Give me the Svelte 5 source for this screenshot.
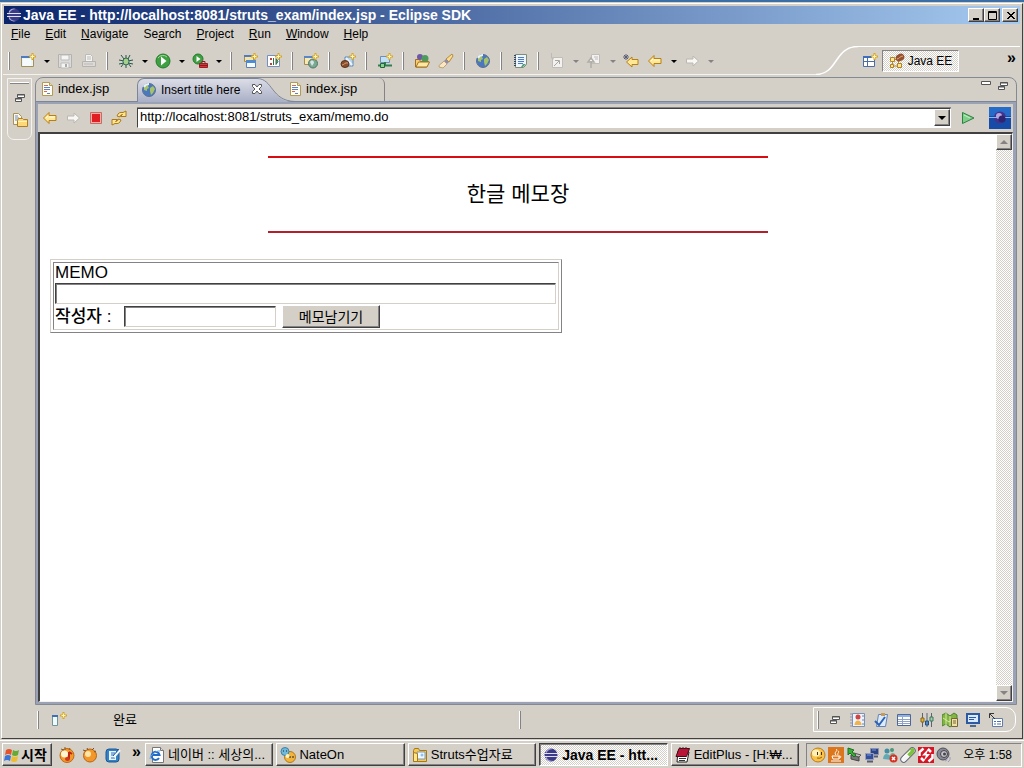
<script>
  const sparkle = '<path d="M12.5 0v7M9 3.500h7" stroke="#d9a520" stroke-width="2"/><path d="M12.500 1.500v4M10.500 3.500h4" stroke="#fff7b0"/>';
  const page = '<path d="M3.500 1.500h7l3 3v10h-10z" fill="#fffdf2" stroke="#b19a5a"/><path d="M10.500 1.500v3h3" fill="#f1dca0" stroke="#b19a5a"/>';
  const backArrow = '<path d="M1.500 8L7 2.500V5.500h7v5H7v3z" fill="#ffe795" stroke="#b97f10" stroke-linejoin="round"/><path d="M4 8l2-2M7 7h6" stroke="#fffbe0"/>';
  const fwdArrow = '<path d="M14.500 8L9 3V6H2.500v4H9v3z" fill="#f8f7f5" stroke="#bcb8b1"/>';
  const globe = '<circle cx="8" cy="8" r="6.500" fill="#4b78bd" stroke="#5d6f92"/><path d="M3 5c1-2 3-3 5-3l-1 2 1 2-2 1v2L3 8zM9 6l3-2 2 3-2 4-2 2-1-4z" fill="#a5c36b"/><path d="M3 5c1-2 3-3 5-3" stroke="#e6f2ff" stroke-width="2" fill="none"/>';
  const eclipse = '<circle cx="8" cy="8" r="6.500" fill="#3b3a87"/><path d="M3 4a6.500 6.500 0 0 1 7-2c-4 0-7 3-7 6s3 6 7 6A6.500 6.500 0 0 1 3 12z" fill="#a9a5d8"/><path d="M1 6.500h14M1 9.500h14" stroke="#dfe0f4" stroke-width="1.200"/>';

  const icons = {
    eclipse,
    globe,
    back: backArrow,
    forward: fwdArrow,
    newfile: '<path d="M1.500 3.500h12v10h-12z" fill="#e9f5f8" stroke="#a6905a"/><path d="M1 3h9v2H1z" fill="#4f7bc0"/><path d="M3 6h8v7H3z" fill="#fff" opacity=".6"/>' + sparkle,
    save: '<path d="M1.500 1.500h13v13h-13z" fill="#dddbd8" stroke="#b4b2b0"/><path d="M4 2h8v5H4zM4 10h8v5H4z" fill="#f6f5f4" stroke="#bbb"/><path d="M9 11v3" stroke="#aaa" stroke-width="2"/>',
    print: '<path d="M4.500 8V1.500h5l2 2V8" fill="#f5f4f3" stroke="#bbb"/><path d="M1.500 8.500h13v5h-13z" fill="#dcd9d6" stroke="#b5b3b0"/><path d="M6 4h4M6 6h4M3 11h9" stroke="#bbb"/>',
    bug: '<path d="M3 2l3 4M12 2l-2 4M1 7l5 1M15 7l-5 1M3 14l3-4M13 14l-3-4M8 2v3M8 12v3M1 11l5-1M15 11l-5-1" stroke="#24544b"/><ellipse cx="8" cy="8.500" rx="3" ry="3.500" fill="#a6cf8c" stroke="#2f6a50"/>',
    run: '<circle cx="8" cy="8" r="7" fill="#3fa043" stroke="#257b2c"/><path d="M3 5a6 6 0 0 1 9-1" stroke="#a3d79a" fill="none"/><path d="M6 3.500l5.500 4.500L6 12.500z" fill="#fff"/>',
    runext: '<circle cx="6" cy="6" r="5" fill="#3fa043" stroke="#257b2c"/><path d="M4.500 3l4 3-4 3z" fill="#fff"/><path d="M7.500 10.500h8v4h-8z" fill="#d6343b" stroke="#982024"/><path d="M10 10V8.500h3V10M7 12.500h9" stroke="#8a1a20" fill="none"/>',
    windows: '<path d="M2.500 2.500h9v6h-9z" fill="#f5e3a5" stroke="#a88a4a"/><path d="M2 2h8v2H2z" fill="#4f7bc0"/><path d="M4.500 7.500h9v7h-9z" fill="#f7fbff" stroke="#5a7fb8"/><path d="M4 7h10v3H4z" fill="#4f8bd0"/>' + sparkle,
    diagram: '<path d="M1.500 2.500h12v11h-12z" fill="#fff" stroke="#7290c2"/><path d="M4 5h2v2H4zM4 10h2v2H4z" fill="#c04040"/><path d="M7.500 5v7M10 5.500l2 3-2 3z" stroke="#386c4c" fill="#5aa06a"/>' + sparkle,
    webnew: '<path d="M1.500 3.500h11v8h-11z" fill="#f6e9b8" stroke="#a88a4a"/><path d="M1 3h9v2H1z" fill="#5a86c5"/><circle cx="10" cy="10.500" r="4.500" fill="#79a98f" stroke="#55756b"/><path d="M7 9c2-3 4-1 4 1l-2 3z" fill="#d6e6e8"/>' + sparkle,
    bean: '<path d="M5 4h8v9H5z" fill="#b3d3ee" stroke="#6289b5"/><path d="M6 5l6 7" stroke="#eaf5ff" stroke-width="2"/><ellipse cx="5" cy="11" rx="4" ry="3.500" fill="#8a4f2e" stroke="#5e331b"/><path d="M2 12c2 0 3-3 6-2" stroke="#d9a27e" fill="none"/>' + sparkle,
    server: '<path d="M3.500 3.500h9v6h-9z" fill="#c3e1f3" stroke="#6f90b6"/><path d="M8 9v4M1 12.500h14" stroke="#2d8050" stroke-width="2"/><path d="M3.500 10.500h4v4h-4z" fill="#8fd18f" stroke="#23683a"/>' + sparkle,
    opentype: '<path d="M1.500 6.500h4l1 2h8l-2 5.500h-11z" fill="#f7cf70" stroke="#a2701c"/><circle cx="6" cy="4" r="3" fill="#6d58a5"/><circle cx="11" cy="5.500" r="3.500" fill="#4d9a5c"/><path d="M2 14l2.500-5h11L13 14z" fill="#fde7a4" stroke="#a2701c"/>',
    brush: '<path d="M14 1L8 6l3 3 4-6z" fill="#f9dc8c" stroke="#b98b3c"/><path d="M8 6l3 3-2 2-3-3z" fill="#8e8cae"/><path d="M6 8l3 3-4 4-4-1c0-3 2-3 3-4z" fill="#f5e7c8" stroke="#c4a06a"/>',
    notebook: '<path d="M3.500 1.500h11v10l-3 3h-8z" fill="#eef6fd" stroke="#7f8c78"/><path d="M6 4.500h6M6 6.500h6M6 8.500h6M6 10.500h5" stroke="#4f7bc0"/><path d="M3 2v12" stroke="#31446a" stroke-width="2" stroke-dasharray="1 1"/><path d="M14 11l-3 3H9l2-3z" fill="#4fa07c"/>',
    nextnote: '<path d="M3.500 4.500h10v10h-10z" fill="#f4f2f0" stroke="#c0bcb6"/><path d="M6 7.500h4.500V11M10 8l-5 5" stroke="#aaa6a0" fill="none"/><path d="M2.500 0v5L5 6" stroke="#bbb" fill="none"/>',
    prevnote: '<path d="M5.500 1.500h8v9h-8z" fill="#f4f2f0" stroke="#c0bcb6"/><path d="M5 15V8M2 9l3-4 3 4z" stroke="#b0aca6" fill="#fff" stroke-width="1.500"/><path d="M8 4h4M9 6h3" stroke="#bbb"/>',
    lastedit: '<path d="M3.500 9L9 4V6.500h6v5H9V14z" fill="#ffe795" stroke="#b97f10"/><path d="M3 1v6M0 4h6M1 2l4 4M5 2L1 6" stroke="#5c5f72"/>',
    perspective: '<path d="M1.500 3.500h11v10h-11z" fill="#fff" stroke="#4d6ea5"/><path d="M1 3h9v2H1z" fill="#3f6fbc"/><path d="M5.500 5v8M1 8.500h12" stroke="#4d6ea5"/>' + sparkle,
    javaee: '<path d="M3.500 6v7h6M5 6.500h4.500v4" stroke="#b28a38" fill="none"/><path d="M1.500 4.500h4v4h-4zM1.500 11.500h3v3h-3zM8.500 10.500h4v4h-4z" fill="#ffe694" stroke="#b08224"/><ellipse cx="11" cy="4.500" rx="4.500" ry="3.500" fill="#95502f" transform="rotate(-25 11 4.500)"/><path d="M8 6c2 0 3-3 6-3" stroke="#e0aa88" fill="none"/>',
    jsp: page + '<path d="M5 4.500h4M5 10.500h3" stroke="#d56a5a"/><path d="M5 6.500h6M5 8.500h6M8 12.500h3" stroke="#5b83c6"/>',
    restore: '<path d="M5.500 4.500h7v3h-7z" fill="#fff" stroke="#555"/><path d="M3.500 8.500h6v3h-6z" fill="#fff" stroke="#555"/><path d="M5 5h8M3 9h7" stroke="#555"/>',
    minimize: '<path d="M3.500 3.500h9v3h-9z" fill="#fff" stroke="#555"/>',
    explorer: '<path d="M1.500 1.500h5l3 3v8h-8z" fill="#fdf8e5" stroke="#a9915a"/><path d="M3 4h3M3 6h4M3 8h3" stroke="#6a8bc1"/><path d="M5.500 8.500l1-2h4l1 1h4v7h-10z" fill="#fbd878" stroke="#b07c24"/><path d="M6 9.500h9" stroke="#fff2bd"/>',
    stop: '<path d="M2.500 2.500h11v11h-11z" fill="#f4b0a7" stroke="#c86b65"/><path d="M4 4h8v8H4z" fill="#df1f22"/>',
    refresh: '<path d="M15 1v5.500H9.500l2-2C10 4.500 9 5.500 8.500 7L6 6C7 3 9 2 12 2.500z" fill="#ffe795" stroke="#ad7714" stroke-linejoin="round"/><path d="M1 15V9.500h5.500l-2 2c1.500 0 2.500-1 3-2.500L10 10c-1 3-3 4-6 3.500z" fill="#ffe795" stroke="#ad7714" stroke-linejoin="round"/>',
    go: '<path d="M2.500 2.500L14 8 2.500 13.500z" fill="#7fcf8b" stroke="#2d8140"/><path d="M4 5l6 3" stroke="#c8efc9"/>',
    close: '<path d="M3.500 3.500h2.500l2 2.500 2-2.500h2.500v2l-2.500 2.500 2.500 2.500v2H10L8 10l-2 2.500H3.500v-2L6 8 3.500 5.500z" fill="#fff" stroke="#555"/>',
    fastview: '<path d="M1.500 3.500h5v10h-5z" fill="#f0fafa" stroke="#75949a"/><path d="M1 3h6v2H1z" fill="#426eb8"/>' + sparkle,
    person: '<path d="M2.500 1.500h12v13h-12z" fill="#eef3fa" stroke="#7d8fb4"/><path d="M1 1v14" stroke="#8894ad" stroke-dasharray="2 1"/><circle cx="8" cy="5" r="2.500" fill="#cf4445"/><path d="M4.500 13c0-6 7-6 7 0z" fill="#f0b24a"/><path d="M13 3v10" stroke="#6686bb" stroke-dasharray="2 2"/>',
    tasks: '<path d="M5.500 2.500h9l-2 12h-9z" fill="#dceafa" stroke="#6484b4"/><path d="M8 1h4v3H8z" fill="#c99a57"/><path d="M2 9l4 4 6-8" stroke="#2d63b4" stroke-width="2" fill="none"/>',
    table: '<path d="M1.500 2.500h13v11h-13z" fill="#fff" stroke="#4e6796"/><path d="M2 3h12v2H2z" fill="#91afe0"/><path d="M2 7.500h12M2 9.500h12M2 11.500h12M6.500 5v8" stroke="#91a2c4"/>',
    sliders: '<path d="M3.500 1v14M8 1v14M12.500 1v14" stroke="#5c6474"/><path d="M2 6h3v4H2z" fill="#e5b63c" stroke="#866615"/><path d="M6.500 9h3v4h-3z" fill="#4c8bc8" stroke="#244e82"/><path d="M11 5h3v4h-3z" fill="#9ed0b0" stroke="#3e7855"/>',
    map: '<path d="M0 3l4-2 4 3 4-3 3 2v11l-3-2-4 3-4-3-4 2z" fill="#81b442" stroke="#4c812c"/><path d="M4 1v12M8 4v10M1 6l6 4 5-4" stroke="#d6eca0" fill="none"/><path d="M9.500 6.500h6v8h-6z" fill="#eee0a4" stroke="#766637"/><path d="M11 9h3M11 11h3" stroke="#766637"/>',
    console: '<path d="M2 2h12v9H2z" fill="#d6e9ff" stroke="#2c59a0" stroke-width="2"/><path d="M4 5.500h7M4 7.500h5" stroke="#2c59a0"/><path d="M5 14h6" stroke="#4d668c" stroke-width="2"/>',
    stack: '<path d="M4.500 6.500h10v8h-10z" fill="#fff" stroke="#637da8"/><path d="M6 9.500h2M9 9.500h4M6 12h2M9 12h4" stroke="#4b71af"/><path d="M1.500 6V1.500H6M2 2l5 5" stroke="#333"/>',
    windowsflag: '<path d="M2 3q3-2 6 0l-1 5q-3-2-6 0z" fill="#e7532b"/><path d="M9 3q3 2 6 0l-1 5q-3 2-6 0z" fill="#68a934"/><path d="M1 9q3-2 6 0l-1 5q-3-2-6 0z" fill="#3b75d7"/><path d="M8 9q3 2 6 0l-1 5q-3 2-6 0z" fill="#efbd2c"/>',
    music: '<circle cx="8" cy="8.500" r="7" fill="#f39a2c" stroke="#c26914"/><ellipse cx="5.500" cy="7" rx="3.500" ry="3.500" fill="#fff4d1"/><path d="M10 5v7M10 5l3 2" stroke="#bd2414" stroke-width="2"/><ellipse cx="8.500" cy="12" rx="2.500" ry="2" fill="#cf3520"/><path d="M2 2l3 1M6 0v3M11 1l-1 2" stroke="#8a5a22"/>',
    orange: '<circle cx="8" cy="8.500" r="6.500" fill="#f3972a" stroke="#ba6412"/><circle cx="6" cy="7" r="3" fill="#ffe4a8"/><path d="M1 3l3 1M5 1l1 2M12 1l-2 2M14 4l-2 1" stroke="#80521a"/>',
    desktop: '<rect x="1" y="2" width="13" height="13" rx="3" fill="#3383c4" stroke="#1b5798"/><path d="M4 4h7v9H4z" fill="#e9f5ff"/><path d="M6 6h4M6 8h3M6 11h4" stroke="#2c70b5"/><path d="M15 3l-6 7" stroke="#f3fbff" stroke-width="2"/><path d="M14 2l-6 7" stroke="#255a96"/>',
    ie: '<path d="M3.500.5h8l3 3v12h-11z" fill="#fff" stroke="#777"/><path d="M11.500.5v3h3" fill="#ddd" stroke="#777"/><path d="M10 11a4 4 0 1 1 .5-3H4" fill="none" stroke="#226cc8" stroke-width="2"/><path d="M1 12C1 8 8 3 11 4" stroke="#58a4ea" fill="none"/>',
    nateon: '<circle cx="10" cy="10" r="5.500" fill="#f2b43b" stroke="#b27a1e"/><circle cx="5" cy="4.500" r="4" fill="#6fb9da" stroke="#3882ac"/><path d="M3 4h1M6 4h1" stroke="#222"/><path d="M10 9v2M13 9v2" stroke="#222"/><circle cx="7.500" cy="9" r="2" fill="#fff1bd"/>',
    folder: '<path d="M1.500 3.500l1-2h4l1 2h7v11h-13z" fill="#f5c951" stroke="#a77818"/><path d="M5 5h8v7H5z" fill="#f1f8ff" stroke="#779ac0"/><path d="M1.500 14.500v-9l4 1v8z" fill="#ffe48a" stroke="#a77818"/><circle cx="10" cy="8" r="1.500" fill="#8fc2ec"/>',
    editplus: '<path d="M3 4l11 1-2 10H2z" fill="#fff" stroke="#222"/><path d="M4 1.500h10.500l-3 8H1z" fill="#b91637" stroke="#4a0718"/><path d="M4 11.500h7M4 13.500h6" stroke="#333"/><path d="M5 0v2M8 0v2M11 0v2" stroke="#333"/>',
    smile: '<circle cx="8" cy="8" r="7" fill="#f7c247" stroke="#bb7b1f"/><ellipse cx="6" cy="6" rx="4" ry="3.500" fill="#ffefb5"/><path d="M7.500 5v3M11.500 5v3" stroke="#46300b"/><path d="M7 11q3 1 5-1" stroke="#9b5e10" fill="none"/>',
    java: '<path d="M0 0h16v16H0z" fill="#dc761c"/><path d="M8 2c3 2-3 3 0 6M10 4c2 1-1 2 0 4M4 9h7v3H5zM11 9c3 0 2 2 0 2M3 14h10" stroke="#fff" fill="none"/>',
    removable: '<path d="M5 8l8 2v4l-8-2z" fill="#777" stroke="#444"/><path d="M5 8l3-2 7 2-2 2z" fill="#c4c4c4" stroke="#555"/><path d="M2 1l6 2-2 2 4 3-2 2-4-4-2 2z" fill="#3dae3a" stroke="#1c6e20"/>',
    network: '<path d="M6.500 1.500h8v6h-8z" fill="#2c4384" stroke="#8992b0"/><path d="M1.500 6.500h8v6h-8z" fill="#334f99" stroke="#999fba"/><path d="M3 14.500h6M10 9.500h4" stroke="#555b70" stroke-width="2"/><path d="M3 8h4M8 3h4" stroke="#7998dc"/>',
    messenger: '<circle cx="5" cy="4" r="2.500" fill="#418fa2"/><path d="M1 12q1-8 8-3l1 4z" fill="#60aab5"/><circle cx="10" cy="3" r="2" fill="#4c957a"/><path d="M8 8q3-5 6 1z" fill="#72b297"/><circle cx="11.500" cy="11.500" r="4" fill="#d63325"/><path d="M10 10l3 3M13 10l-3 3" stroke="#fff" stroke-width="1.500"/>',
    pill: '<g transform="rotate(-45 8 8)"><rect x="-1" y="5" width="18" height="6" rx="3" fill="#f4f6f4" stroke="#667"/><path d="M8 5.500h6a2.500 2.500 0 0 1 0 5H8z" fill="#7cc23b"/><path d="M3 6.500h10" stroke="#fff"/></g>',
    shield: '<path d="M0 0h16v16H0z" fill="#d61626"/><path d="M1.500 9V5l4-3.500M14.500 7v4l-4 3.500M6 14l-3-3M10 2l3 3" stroke="#fff" stroke-width="2.500"/><path d="M11 1L4 8.500h4L5 15l7-8H8.500z" fill="#fff"/>',
    speaker: '<circle cx="7" cy="7" r="6" fill="#888894" stroke="#4e4e5b"/><circle cx="8" cy="7" r="3.500" fill="#c2c2cc" stroke="#444"/><circle cx="8.500" cy="7" r="1.500" fill="#444"/><path d="M14 10q1 3-2 5M11 12q0 2-2 2" stroke="#9a9ac0" fill="none"/>'
  };

  const menus = [['', 'F', 'ile'], ['', 'E', 'dit'], ['', 'N', 'avigate'], ['Se', 'a', 'rch'], ['', 'P', 'roject'], ['', 'R', 'un'], ['', 'W', 'indow'], ['', 'H', 'elp']];

  // '|' is a separator, 'v' a drop-down arrow and 'd' a disabled one
  const tools = ['|', 'newfile', 'v', 'save', 'print', '|', 'bug', 'v', 'run', 'v', 'runext', 'v', '|', 'windows', 'diagram', '|', 'webnew', '|', 'bean', '|', 'server', '|', 'opentype', 'brush', '|', 'globe', '|', 'notebook', '|', 'nextnote', 'd', 'prevnote', 'd', 'lastedit', 'back', 'v', 'forward', 'd'];
  const views = ['restore', 'person', 'tasks', 'table', 'sliders', 'map', 'console', 'stack'];
  const tray = ['smile', 'java', 'removable', 'network', 'messenger', 'pill', 'shield', 'speaker'];
  const tasks = [
    { icon: 'ie', label: '네이버 :: 세상의...' },
    { icon: 'nateon', label: 'NateOn' },
    { icon: 'folder', label: 'Struts수업자료' },
    { icon: 'eclipse', label: 'Java EE - htt...', active: true },
    { icon: 'editplus', label: 'EditPlus - [H:₩...' }
  ];
  let url = $state('http://localhost:8081/struts_exam/memo.do');
  let memo = $state('');
  let author = $state('');
</script>

{#snippet icon(name)}
  <svg class="icon" viewBox="0 0 16 16" fill="none" aria-hidden="true">{@html icons[name]}</svg>
{/snippet}

{#snippet glyph(path)}
  <svg class="glyph" viewBox="0 0 11 11" fill="none" stroke="#000" aria-hidden="true"><path d={path} /></svg>
{/snippet}

<div class="desktop">
  <div class="window">
    <header class="titlebar">
      {@render icon('eclipse')}
      <h1>Java EE - http://localhost:8081/struts_exam/index.jsp - Eclipse SDK</h1>
      <div class="caption">
        <button aria-label="Minimize">{@render glyph('M2 9.500h6M2 8.500h6')}</button>
        <button aria-label="Maximize">{@render glyph('M1.500 1.500h8v8h-8zM1 2.500h9')}</button>
        <button class="apart" aria-label="Close">{@render glyph('M2 2l7 7M3 2l7 7M9 2L2 9M10 2L3 9')}</button>
      </div>
    </header>

    <nav class="menubar">
      {#each menus as [before, key, after]}
        <button>{before}<u>{key}</u>{after}</button>
      {/each}
    </nav>

    <div class="coolbar">
      <div class="tools">
        {#each tools as tool}
          {#if tool === '|'}
            <span class="sep"></span>
          {:else if tool === 'v' || tool === 'd'}
            <button class="drop" class:off={tool === 'd'} aria-label="More"></button>
          {:else}
            <button class="tool" aria-label={tool}>{@render icon(tool)}</button>
          {/if}
        {/each}
      </div>
      <svg class="swoosh" viewBox="0 0 42 29" fill="none" aria-hidden="true">
        <path d="M0 28.500C22 28.500 18 .5 42 .5" stroke="#fff" stroke-width="1.500" />
      </svg>
      <div class="perspectives">
        <button class="tool" aria-label="Open Perspective">{@render icon('perspective')}</button>
        <button class="current">{@render icon('javaee')}Java EE</button>
        <button class="more">»</button>
      </div>
    </div>

    <div class="workbench">
      <aside class="trim">
        <span class="grip"></span>
        <button aria-label="Restore">{@render icon('restore')}</button>
        <button aria-label="Project Explorer">{@render icon('explorer')}</button>
      </aside>

      <main class="folder">
        <div class="tabs">
          <button class="tab first">{@render icon('jsp')}index.jsp</button>
          <div class="tab selected">{@render icon('globe')}Insert title here</div>
          <div class="tail">
            <svg class="curve" viewBox="0 0 46 24" fill="none" aria-hidden="true">
              <defs>
                <linearGradient id="tabfill" x1="0" y1="0" x2="0" y2="1">
                  <stop offset="0" stop-color="#dcdde6" />
                  <stop offset="1" stop-color="#a9afc6" />
                </linearGradient>
              </defs>
              <path d="M0 0h8C24 0 22 23 44 24H0z" fill="url(#tabfill)" />
              <path d="M0 .5h8C24 .5 22 23 46 23.500" stroke="#7b8799" />
            </svg>
            <button class="closer" aria-label="Close tab">{@render icon('close')}</button>
          </div>
          <button class="tab last">{@render icon('jsp')}index.jsp</button>
          <div class="tabtools">
            <button aria-label="Minimize view">{@render icon('minimize')}</button>
            <button aria-label="Restore view">{@render icon('restore')}</button>
          </div>
        </div>

        <div class="browser">
          <div class="address">
            <button class="tool" aria-label="Back">{@render icon('back')}</button>
            <button class="tool" aria-label="Forward">{@render icon('forward')}</button>
            <button class="tool" aria-label="Stop">{@render icon('stop')}</button>
            <button class="tool" aria-label="Refresh">{@render icon('refresh')}</button>
            <div class="combo">
              <input aria-label="Address" bind:value={url} />
              <button class="drop" aria-label="History"></button>
            </div>
            <button class="tool go" aria-label="Go">{@render icon('go')}</button>
            <svg class="throbber" viewBox="0 0 22 22" aria-hidden="true">
              <rect width="22" height="22" fill="#164ca8" />
              <path d="M0 0h22v9H0z" fill="#246bca" />
              <circle cx="11" cy="10.500" r="6" fill="#43338d" />
              <circle cx="10" cy="9" r="3" fill="#b9a4df" />
              <path d="M0 10.500h22" stroke="#8bb6f4" />
              <circle cx="13" cy="12" r="3.500" fill="#30236f" />
            </svg>
          </div>

          <div class="viewport">
            <div class="page">
              <div class="banner">
                <h2>한글 메모장</h2>
              </div>
              <form class="memo" onsubmit={(e) => e.preventDefault()}>
                <div class="cell">
                  <label for="memo">MEMO</label>
                  <input id="memo" bind:value={memo} />
                  <div class="line">
                    <label for="author">작성자 :</label>
                    <input id="author" bind:value={author} />
                    <button>메모남기기</button>
                  </div>
                </div>
              </form>
            </div>
            <div class="scrollbar">
              <button class="up" aria-label="Scroll up"></button>
              <button class="down" aria-label="Scroll down"></button>
            </div>
          </div>
        </div>
      </main>
    </div>

    <footer class="status">
      <span class="sep"></span>
      <button class="fast" aria-label="Show view">{@render icon('fastview')}</button>
      <span class="message">완료</span>
      <span class="sep"></span>
      <div class="views">
        <span class="sep"></span>
        {#each views as view}
          <button aria-label={view}>{@render icon(view)}</button>
        {/each}
      </div>
    </footer>
  </div>

  <div class="taskbar">
    <button class="task start">{@render icon('windowsflag')}시작</button>
    <div class="quick">
      <button aria-label="Music">{@render icon('music')}</button>
      <button aria-label="Player">{@render icon('orange')}</button>
      <button aria-label="Desktop">{@render icon('desktop')}</button>
      <button class="more">»</button>
    </div>
    <div class="tasks">
      {#each tasks as task}
        <button class="task" class:active={task.active}>{@render icon(task.icon)}<span>{task.label}</span></button>
      {/each}
    </div>
    <div class="tray">
      {#each tray as item}
        {@render icon(item)}
      {/each}
      <time>오후 1:58</time>
    </div>
  </div>
</div>

<style>
  :global(body) {
    margin: 0;
    background: #3a6ea5;
  }
  .desktop {
    box-sizing: border-box;
    min-height: 100vh;
    padding-top: 2px;
    display: flex;
    flex-direction: column;
    background: #3a6ea5;
    color: #000;
    font: 12px/16px 'Liberation Sans', 'Noto Sans CJK KR', sans-serif;
  }
  .desktop * {
    box-sizing: border-box;
  }
  button,
  input {
    font: inherit;
    color: inherit;
  }
  button {
    display: flex;
    align-items: center;
    justify-content: center;
    padding: 0;
    border: 0;
    background: none;
    white-space: nowrap;
  }
  .icon {
    display: block;
    flex: none;
    width: 16px;
    height: 16px;
  }

  .window {
    flex: 1;
    display: flex;
    flex-direction: column;
    padding: 2px;
    background: #d4d0c8;
    border: 1px solid;
    border-color: #fff #404040 #404040 #fff;
    outline: 1px solid #d4d0c8;
    margin: 1px;
  }
  .titlebar {
    display: flex;
    align-items: center;
    gap: 1px;
    height: 18px;
    padding: 0 2px;
    background: linear-gradient(90deg, #0a246a, #a6caf0);
    color: #fff;
  }
  h1 {
    flex: 1;
    margin: 0;
    font-size: 14px;
    line-height: 16px;
    font-weight: 700;
    white-space: nowrap;
  }
  .caption {
    display: flex;
  }
  .caption button {
    width: 16px;
    height: 14px;
  }
  .caption .apart {
    margin-left: 2px;
  }
  .glyph {
    width: 11px;
    height: 11px;
  }
  .caption button,
  .combo .drop,
  .scrollbar button,
  .line button,
  .task {
    background: #d4d0c8;
    border: 1px solid;
    border-color: #fff #404040 #404040 #fff;
    box-shadow: inset -1px -1px #848284;
  }

  .menubar {
    display: flex;
    gap: 15px;
    height: 22px;
    padding: 2px 7px 4px;
  }

  .coolbar {
    display: flex;
    height: 29px;
    margin-bottom: 2px;
  }
  .tools {
    flex: 1;
    display: flex;
    align-items: center;
    margin-left: -1px;
    padding-top: 2px;
    border-bottom: 1px solid #f4f2ee;
  }
  .tool {
    width: 24px;
    height: 24px;
    flex: none;
  }
  .sep {
    flex: none;
    width: 13px;
    height: 18px;
    background: linear-gradient(90deg, #fff 1px, #848284 1px) 5px 0 / 2px 100% no-repeat;
  }
  .drop {
    flex: none;
    width: 13px;
    height: 16px;
  }
  .drop::after,
  .up::after,
  .down::after {
    content: '';
    border: 3px solid transparent;
    border-top-color: #000;
    border-bottom: 0;
  }
  .drop.off::after,
  .down::after {
    border-top-color: #848284;
  }
  .swoosh {
    width: 42px;
    height: 29px;
  }
  .perspectives {
    display: flex;
    align-items: center;
    width: 162px;
    border-top: 1px solid #fff;
  }
  .current {
    gap: 3px;
    width: 77px;
    height: 22px;
    border: 1px solid;
    border-color: #848284 #fff #fff #848284;
    background: repeating-conic-gradient(#fff 0 25%, #d4d0c8 0 50%) 0 0 / 2px 2px;
  }
  .more {
    font-size: 16px;
  }
  .perspectives .more {
    margin-left: auto;
    height: 22px;
    padding: 0 4px 6px 0;
    font-weight: 700;
  }

  .workbench {
    flex: 1;
    display: flex;
    gap: 3px;
    padding: 0 3px;
  }
  .trim {
    align-self: flex-start;
    display: flex;
    flex-direction: column;
    align-items: center;
    gap: 6px;
    width: 25px;
    height: 62px;
    margin-top: 1px;
    padding-top: 3px;
    border: 1px solid #f4f2ee;
    border-radius: 0 0 7px 7px;
  }
  .grip {
    width: 19px;
    height: 2px;
    border-top: 1px solid #fff;
    border-bottom: 1px solid #848284;
  }
  .folder {
    flex: 1;
    display: flex;
    flex-direction: column;
    border: 1px solid #848a94;
    border-radius: 8px 8px 0 0;
  }
  .tabs {
    display: flex;
    height: 24px;
    border-bottom: 1px solid #7b8799;
  }
  .tab {
    display: flex;
    align-items: center;
    justify-content: flex-start;
    gap: 3px;
    padding-bottom: 1px;
    white-space: nowrap;
    font-size: 13px;
  }
  .first {
    width: 101px;
    padding-left: 3px;
  }
  .selected {
    width: 112px;
    height: 24px;
    padding-left: 3px;
    border-left: 1px solid #7b8799;
    border-top: 1px solid #7b8799;
    border-radius: 7px 0 0 0;
    background: linear-gradient(#dcdde6, #a9afc6);
    font-size: 12px;
    gap: 4px;
  }
  .tail {
    position: relative;
    width: 38px;
    padding-top: 3px;
  }
  .curve {
    position: absolute;
    left: 0;
    top: 0;
    width: 46px;
    height: 24px;
  }
  .closer {
    position: relative;
  }
  .last {
    position: relative;
    width: 98px;
    border-right: 1px solid #848284;
    border-top-right-radius: 6px;
  }
  .tabtools {
    display: flex;
    gap: 1px;
    margin-left: auto;
    padding-right: 5px;
    height: 16px;
  }

  .browser {
    flex: 1;
    display: flex;
    flex-direction: column;
    border: 2px solid #9ca2b5;
    border-right-width: 3px;
  }
  .address {
    display: flex;
    align-items: center;
    height: 28px;
    padding: 0 2px 0 0;
  }
  .address .tool {
    width: 23px;
  }
  .combo {
    flex: 1;
    display: flex;
    height: 20px;
    margin-left: 7px;
    background: #fff;
    border: 1px solid;
    border-color: #404040 #fff #fff #404040;
    box-shadow: 0 -1px #848284;
  }
  .combo input {
    flex: 1;
    min-width: 0;
    padding: 0 2px 3px;
    border: 0;
    background: none;
    font-size: 13px;
    outline: none;
  }
  .combo .drop {
    width: 16px;
    height: 17px;
  }
  .combo .drop::after {
    border-width: 4px 4px 0;
  }
  .address .go {
    width: 34px;
  }
  .throbber {
    width: 22px;
    height: 22px;
    margin-left: 4px;
  }
  .viewport {
    flex: 1;
    display: flex;
    background: #fff;
    border: 2px solid #404040;
    border-width: 2px 1px 1px 2px;
    border-bottom-color: #f4f2ee;
    border-right-color: #f4f2ee;
  }
  .page {
    flex: 1;
    min-width: 0;
    padding: 22px 10px;
  }
  .banner {
    max-width: 500px;
    margin: 0 auto 26px;
    border-top: 2px solid #d80d14;
    border-bottom: 2px solid #b51f2b;
  }
  h2 {
    margin: 0;
    padding: 20px 0 21px;
    text-align: center;
    font-size: 21px;
    line-height: 32px;
    font-weight: 400;
  }
  .memo {
    max-width: 512px;
    padding: 2px;
    border: 1px solid;
    border-color: #d4d0c8 #848284 #848284 #d4d0c8;
  }
  .cell {
    padding: 0 2px 1px 1px;
    border: 1px solid;
    border-color: #848284 #d4d0c8 #d4d0c8 #848284;
    font-size: 17px;
    line-height: 20px;
    font-weight: 500;
  }
  .cell label {
    display: block;
    white-space: nowrap;
  }
  .cell input {
    display: block;
    width: 100%;
    height: 21px;
    padding: 0 2px;
    background: #fff;
    border: 1px solid;
    border-color: #404040 #d4d0c8 #d4d0c8 #404040;
    box-shadow: inset 1px 1px #848284;
    font-size: 13px;
    outline: none;
  }
  .line {
    display: flex;
    align-items: center;
    margin-top: 1px;
  }
  .line label {
    width: 69px;
  }
  .line input {
    width: 152px;
  }
  .line button {
    width: 98px;
    height: 23px;
    margin-left: 6px;
    font-size: 14px;
    font-weight: 400;
  }
  .scrollbar {
    display: flex;
    flex-direction: column;
    justify-content: space-between;
    width: 16px;
    background: repeating-conic-gradient(#fff 0 25%, #d4d0c8 0 50%) 0 0 / 2px 2px;
  }
  .scrollbar button {
    width: 16px;
    height: 16px;
  }
  .up::after {
    border: 4px solid transparent;
    border-top: 0;
    border-bottom-color: #848284;
  }
  .down::after {
    border-width: 4px 4px 0;
  }

  .status {
    display: flex;
    align-items: center;
    height: 31px;
    padding: 0 4px 2px 28px;
  }
  .fast {
    width: 28px;
  }
  .message {
    width: 441px;
    padding-left: 40px;
    font-size: 13px;
  }
  .views {
    display: flex;
    align-items: center;
    height: 25px;
    margin-left: auto;
    padding-right: 8px;
    border: 1px solid #fff;
    border-radius: 0 10px 10px 0;
  }
  .views .sep {
    width: 9px;
    background-position-x: 3px;
  }
  .views button {
    width: 23px;
    height: 23px;
  }

  .taskbar {
    display: flex;
    align-items: center;
    height: 28px;
    padding: 0 2px;
    background: #d4d0c8;
    border-top: 1px solid #fff;
  }
  .task {
    flex: 1;
    min-width: 0;
    height: 23px;
    gap: 3px;
    padding: 0 3px;
    justify-content: flex-start;
    font-size: 13px;
  }
  .task span {
    overflow: hidden;
  }
  .task.start {
    flex: none;
    width: 50px;
    gap: 1px;
    padding: 0 1px;
    font-size: 14px;
    font-weight: 700;
  }
  .task.active {
    border-color: #404040 #fff #fff #404040;
    box-shadow: inset 1px 1px #848284;
    background: repeating-conic-gradient(#fff 0 25%, #d4d0c8 0 50%) 0 0 / 2px 2px;
    font-size: 14px;
    font-weight: 700;
  }
  .quick {
    display: flex;
    align-items: center;
    gap: 7px;
    width: 93px;
    padding-left: 7px;
  }
  .quick .more {
    margin-left: 4px;
    padding-bottom: 6px;
    font-weight: 700;
  }
  .tasks {
    flex: 1;
    display: flex;
    gap: 3px;
    min-width: 0;
  }
  .tray {
    display: flex;
    align-items: center;
    gap: 2px;
    width: 216px;
    height: 24px;
    margin-left: 7px;
    padding: 0 9px 0 3px;
    border: 1px solid;
    border-color: #848284 #fff #fff #848284;
  }
  time {
    margin-left: auto;
    white-space: nowrap;
  }
</style>
